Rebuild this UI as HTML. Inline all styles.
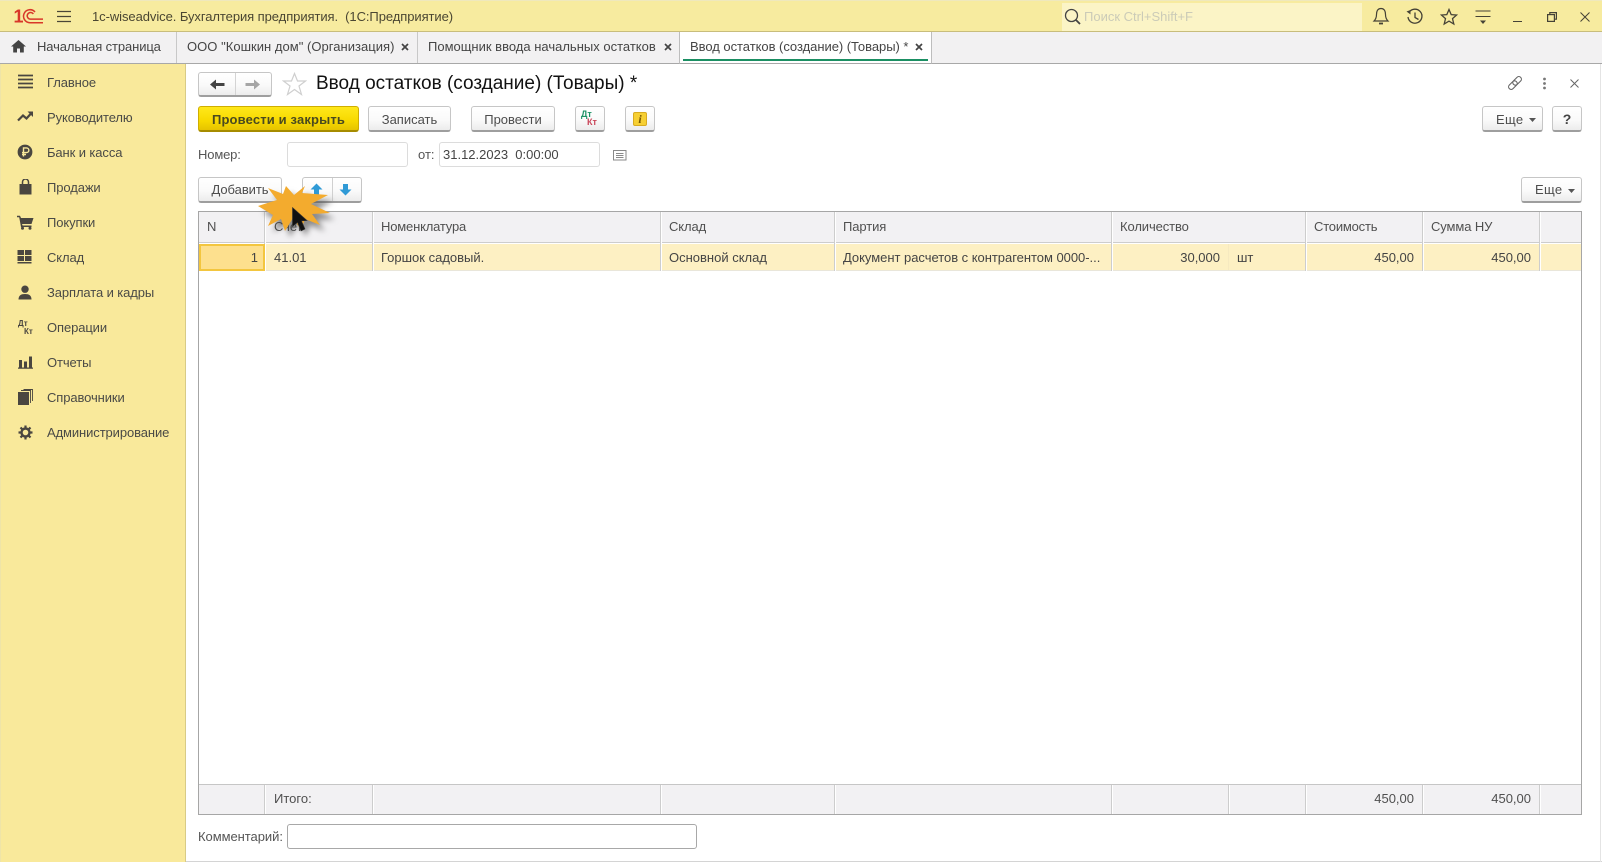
<!DOCTYPE html>
<html lang="ru"><head><meta charset="utf-8"><title>1C</title>
<style>
html,body{margin:0;padding:0;width:1602px;height:862px;overflow:hidden;background:#fff}
body{position:relative;font-family:"Liberation Sans","Noto Sans CJK SC",sans-serif;font-size:13px;color:#4a4a46}
div,span,svg{position:absolute;box-sizing:border-box}
.t{white-space:nowrap;line-height:16px}
.sb{letter-spacing:-0.1px}
.btn{background:linear-gradient(#fff,#fafafa 55%,#ececec);border:1px solid #c6c6c6;border-bottom:2px solid #9e9e9e;border-radius:3px;text-align:center;line-height:25px;color:#4d4d4d}
.inp{background:#fff;border:1px solid #dcdcdc;border-radius:3px}
.hd{top:213px;height:30px;line-height:28px;white-space:nowrap;color:#505050;letter-spacing:-0.1px}
.cl{top:245px;height:26px;line-height:25px;white-space:nowrap;color:#444}
.ft{top:785px;height:28px;line-height:27px;white-space:nowrap;color:#505050}
.sep{width:2px;background:#fff;border-left:1px solid #cdcdcd}
</style></head><body>

<!-- top bar -->
<div style="left:0;top:0;width:1602px;height:32px;background:#f7eb9f;border-bottom:1px solid #c8bd7c;border-top:1px solid #efe8bd"></div>
<svg style="left:13px;top:8px" width="32" height="17" viewBox="0 0 32 17" fill="none">
<text x="0.500" y="14.500" font-family="Liberation Sans" font-weight="700" font-size="18" fill="#d8372a">1</text>
<path d="M22 4A6.500 6.500 0 1 0 17 14.700H30M20.300 6A3.300 3.300 0 1 0 17.500 11.100H30" stroke="#d8372a" stroke-width="1.500"/>
</svg>
<svg style="left:56px;top:10px" width="16" height="13"><path d="M1 1.500H15M1 6.500H15M1 11.500H15" stroke="#4a4636" stroke-width="1.200"/></svg>
<div class="t" style="left:92px;top:9px;color:#4a4632;letter-spacing:-0.070px">1c-wiseadvice. Бухгалтерия предприятия.&nbsp; (1С:Предприятие)</div>

<div style="left:1062px;top:3px;width:300px;height:28px;background:#fbf4c6"></div>
<svg style="left:1064px;top:8px" width="18" height="18" fill="none"><circle cx="7.500" cy="7.500" r="6" stroke="#444" stroke-width="1.300"/><path d="M12 12L16 16" stroke="#444" stroke-width="1.800"/></svg>
<div class="t" style="left:1084px;top:9px;color:#cbcbb8;font-size:13px">Поиск Ctrl+Shift+F</div>
<svg style="left:1372px;top:7px" width="18" height="20" fill="none" stroke="#454236" stroke-width="1.200"><path d="M9 1.500C5.500 1.500 4.500 4.500 4.500 7.500C4.500 11 3.500 12.500 2 14H16C14.500 12.500 13.500 11 13.500 7.500C13.500 4.500 12.500 1.500 9 1.500Z"/><path d="M7 16.500H11" stroke-width="1.800"/></svg>
<svg style="left:1406px;top:8px" width="18" height="18" fill="none" stroke="#454236" stroke-width="1.300"><path d="M3 4.500A7 7 0 1 1 2 9"/><path d="M0.500 3.500L4.500 6.500L4.500 2" fill="#454236" stroke="none"/><path d="M9 4.500V9.500L12.500 11.500"/></svg>
<svg style="left:1440px;top:8px" width="18" height="18" fill="none" stroke="#454236" stroke-width="1.300"><path d="M9 1.500L11.200 6.600L16.600 7L12.500 10.600L13.800 16L9 13.100L4.200 16L5.500 10.600L1.400 7L6.800 6.600Z"/></svg>
<svg style="left:1475px;top:10px" width="16" height="16" fill="none"><path d="M0.500 1H15.500M0.500 6.500H15.500" stroke="#454236" stroke-width="1.100"/><path d="M5 10.500H11L8 14Z" fill="#454236"/></svg>
<div style="left:1513px;top:21px;width:9px;height:1px;background:#454236"></div>
<svg style="left:1547px;top:12px" width="10" height="10" fill="none" stroke="#454236" stroke-width="1.200"><rect x="0.600" y="2.600" width="6.800" height="6.800"/><path d="M2.800 2.500V.6H9.400V7.200H7.500"/></svg>
<svg style="left:1580px;top:12px" width="10" height="10" fill="none" stroke="#454236" stroke-width="1"><path d="M0.500 0.500L9.500 9.500M9.500 0.500L0.500 9.500"/></svg>

<!-- tab bar -->
<div style="left:0;top:32px;width:1602px;height:32px;background:#f2f1f2;border-bottom:1px solid #a8a8a8"></div>
<svg style="left:11px;top:40px" width="15" height="13"><path d="M7.500 0L0 6.500H2.200V12.500H6V8.500H9V12.500H12.800V6.500H15Z" fill="#444"/></svg>
<div class="t" style="left:37px;top:39px;color:#454545;letter-spacing:-0.110px">Начальная страница</div>
<div style="left:176px;top:32px;width:1px;height:31px;background:#c8c8c8"></div>
<div class="t" style="left:187px;top:39px;color:#454545;letter-spacing:0.030px">ООО "Кошкин дом" (Организация)</div>
<svg style="left:401px;top:43px" width="8" height="8"><path d="M1 1L7 7M7 1L1 7" stroke="#444" stroke-width="1.700"/></svg>
<div style="left:417px;top:32px;width:1px;height:31px;background:#c8c8c8"></div>
<div class="t" style="left:428px;top:39px;color:#454545">Помощник ввода начальных остатков</div>
<svg style="left:664px;top:43px" width="8" height="8"><path d="M1 1L7 7M7 1L1 7" stroke="#444" stroke-width="1.700"/></svg>
<div style="left:679px;top:32px;width:253px;height:32px;background:#fff;border-left:1px solid #bdbdbd;border-right:1px solid #bdbdbd;border-bottom:1px solid #a8a8a8"></div>
<div style="left:683px;top:59px;width:245px;height:2px;background:#1b8f63"></div>
<div class="t" style="left:690px;top:39px;color:#454545;letter-spacing:-0.040px">Ввод остатков (создание) (Товары) *</div>
<svg style="left:915px;top:43px" width="8" height="8"><path d="M1 1L7 7M7 1L1 7" stroke="#444" stroke-width="1.700"/></svg>

<!-- sidebar -->
<div style="left:0;top:64px;width:186px;height:798px;background:#f9e99b;border-right:1px solid #d8cb86;border-left:1px solid #efe4a8"></div>
<svg style="left:17px;top:74px" width="16" height="16"><path d="M1 1.500H16M1 5.500H16M1 9.500H16M1 13.500H16" stroke="#4a4640" stroke-width="1.800"/></svg>
<div class="t sb" style="left:47px;top:75px">Главное</div>
<svg style="left:17px;top:110px" width="17" height="13" fill="none"><path d="M1 10.500L6 5.500L9.500 8.500L14 3.500" stroke="#4a4640" stroke-width="2.200"/><path d="M10.500 1.500H16V7Z" fill="#4a4640"/></svg>
<div class="t sb" style="left:47px;top:110px">Руководителю</div>
<svg style="left:17px;top:144px" width="16" height="16"><circle cx="8" cy="8" r="7.400" fill="#4a4640"/><path d="M6.500 12.500V3.900H9.500A2.300 2.300 0 0 1 9.500 8.600H5M5 10.500H9" stroke="#f9e99b" stroke-width="1.400" fill="none"/></svg>
<div class="t sb" style="left:47px;top:145px">Банк и касса</div>
<svg style="left:19px;top:179px" width="13" height="16" fill="none"><path d="M0.500 5H12.500V15.500H0.500Z" fill="#4a4640"/><path d="M3.500 7V3A3 3 0 0 1 9.500 3V7" stroke="#4a4640" stroke-width="1.500"/></svg>
<div class="t sb" style="left:47px;top:180px">Продажи</div>
<svg style="left:17px;top:215px" width="17" height="15"><path d="M0 0.800H3L4 3H16.500L14.500 9H5L5.600 10.500H14.500V12H4L2.200 2.200H0Z" fill="#4a4640"/><circle cx="5.500" cy="13.300" r="1.500" fill="#4a4640"/><circle cx="13" cy="13.300" r="1.500" fill="#4a4640"/></svg>
<div class="t sb" style="left:47px;top:215px">Покупки</div>
<svg style="left:17px;top:250px" width="15" height="14"><path d="M0.500 0H7V5H0.500ZM8 0H14.500V5H8ZM0.500 6H7V11H0.500ZM8 6H14.500V11H8ZM0.500 12H14.500V13.500H0.500Z" fill="#4a4640"/></svg>
<div class="t sb" style="left:47px;top:250px">Склад</div>
<svg style="left:18px;top:285px" width="14" height="15"><circle cx="7" cy="4.200" r="3.700" fill="#4a4640"/><path d="M0.500 14.500C0.500 10.500 3 9 7 9S13.500 10.500 13.500 14.500Z" fill="#4a4640"/></svg>
<div class="t sb" style="left:47px;top:285px">Зарплата и кадры</div>
<div style="left:18px;top:319px;font:700 8px/9px 'Liberation Sans',sans-serif;color:#4a4640">Дт</div>
<div style="left:24px;top:327px;font:700 8px/9px 'Liberation Sans',sans-serif;color:#4a4640">Кт</div>
<div class="t sb" style="left:47px;top:320px">Операции</div>
<svg style="left:18px;top:356px" width="15" height="13"><path d="M1 4H4V11.500H1ZM6 5.500H9V11.500H6ZM11 0.500H14V11.500H11ZM0 11.500H15V12.700H0Z" fill="#4a4640"/></svg>
<div class="t sb" style="left:47px;top:355px">Отчеты</div>
<svg style="left:18px;top:389px" width="15" height="16" fill="none"><path d="M0 3H11V16H0Z" fill="#4a4640"/><path d="M3 1.500H12.500V14M5.500 0.500H14.500V12" stroke="#4a4640" stroke-width="0.900"/></svg>
<div class="t sb" style="left:47px;top:390px">Справочники</div>
<svg style="left:18px;top:425px" width="15" height="15" fill="none"><circle cx="7.500" cy="7.500" r="4" stroke="#4a4640" stroke-width="2.400"/><path d="M7.500 0.500V3M7.500 12V14.500M0.500 7.500H3M12 7.500H14.500M2.500 2.500L4.300 4.300M10.700 10.700L12.500 12.500M12.500 2.500L10.700 4.300M4.300 10.700L2.500 12.500" stroke="#4a4640" stroke-width="2.200"/></svg>
<div class="t sb" style="left:47px;top:425px">Администрирование</div>

<!-- form header -->
<div class="btn" style="left:198px;top:72px;width:74px;height:25px"></div>
<div style="left:235px;top:73px;width:1px;height:22px;background:#d4d4d4"></div>
<svg style="left:210px;top:79px" width="15" height="11"><path d="M0 5.500L6 0.500V4H14.500V7H6V10.500Z" fill="#444"/></svg>
<svg style="left:245px;top:79px" width="15" height="11"><path d="M15 5.500L9 0.500V4H0.500V7H9V10.500Z" fill="#a6a6a6"/></svg>
<svg style="left:282px;top:72px" width="25" height="24" fill="#fff" stroke="#cfcfcf" stroke-width="1.200"><path d="M12.500 1.500L15.500 9H23.500L17 14L19.500 22.500L12.500 17.500L5.500 22.500L8 14L1.500 9H9.500Z"/></svg>
<div class="t" style="left:316px;top:73px;font-size:19px;line-height:22px;color:#111">Ввод остатков (создание) (Товары) *</div>
<svg style="left:1506px;top:74px" width="18" height="18" fill="none" stroke="#666" stroke-width="1.100"><g transform="translate(9 9) rotate(-45)"><rect x="-8" y="-2.600" width="10" height="5.200" rx="2.600"/><rect x="-2" y="-2.600" width="10" height="5.200" rx="2.600"/></g></svg>
<svg style="left:1542px;top:77px" width="5" height="13"><circle cx="2.500" cy="2" r="1.400" fill="#777"/><circle cx="2.500" cy="6.500" r="1.400" fill="#777"/><circle cx="2.500" cy="11" r="1.400" fill="#777"/></svg>
<svg style="left:1570px;top:79px" width="9" height="9"><path d="M0.500 0.500L8.500 8.500M8.500 0.500L0.500 8.500" stroke="#666" stroke-width="1"/></svg>

<!-- command bar -->
<div class="btn" style="left:198px;top:106px;width:161px;height:26px;background:linear-gradient(#ffe81a,#f7d900 60%,#e6c300);border-color:#cfae00 #cfae00 #a68c00;font-weight:700;color:#4a4a20;letter-spacing:0.150px">Провести и закрыть</div>
<div class="btn" style="left:368px;top:106px;width:83px;height:26px">Записать</div>
<div class="btn" style="left:471px;top:106px;width:84px;height:26px">Провести</div>
<div class="btn" style="left:575px;top:106px;width:30px;height:26px"></div>
<div style="left:581px;top:110px;font:700 9px/9px 'Liberation Sans',sans-serif;color:#1e9265">Дт</div>
<div style="left:587px;top:118px;font:700 9px/9px 'Liberation Sans',sans-serif;color:#c9475a">Кт</div>
<div class="btn" style="left:625px;top:106px;width:30px;height:26px"></div>
<div style="left:633px;top:112px;width:14px;height:14px;background:#f6cf33;border:1px solid #d8ab20;border-radius:2px;text-align:center;font:italic 700 12px/12px 'Liberation Serif',serif;color:#7a5a00">i</div>
<div class="btn" style="left:1482px;top:106px;width:61px;height:26px;text-align:left;padding-left:13px;letter-spacing:0.300px">Еще</div>
<svg style="left:1529px;top:118px" width="7" height="4"><path d="M0 0H7L3.500 4Z" fill="#555"/></svg>
<div class="btn" style="left:1552px;top:106px;width:30px;height:26px;font-weight:700;font-size:14px;color:#444">?</div>

<!-- number row -->
<div class="t" style="left:198px;top:147px;color:#555;letter-spacing:-0.150px">Номер:</div>
<div class="inp" style="left:287px;top:142px;width:121px;height:25px"></div>
<div class="t" style="left:418px;top:147px;color:#555">от:</div>
<div class="inp" style="left:439px;top:142px;width:161px;height:25px"></div>
<div class="t" style="left:443px;top:147px;color:#444">31.12.2023&nbsp; 0:00:00</div>
<svg style="left:613px;top:150px" width="14" height="11" fill="none" stroke="#8a8a8a"><rect x="0.500" y="0.500" width="12.500" height="9.500"/><path d="M3 3.500H10.500M3 5.500H10.500M3 7.500H10.500"/></svg>

<!-- table toolbar -->
<div class="btn" style="left:198px;top:177px;width:84px;height:26px;line-height:23px;letter-spacing:-0.050px">Добавить</div>
<div class="btn" style="left:302px;top:177px;width:60px;height:26px"></div>
<div style="left:332px;top:178px;width:1px;height:23px;background:#d0d0d0"></div>
<svg style="left:310px;top:183px" width="13" height="13"><path d="M6.500 0.500L12.500 6.500H9V12H4V6.500H0.500Z" fill="#2f9ad6"/></svg>
<svg style="left:339px;top:183px" width="13" height="13"><path d="M6.500 12.500L12.500 6.500H9V1H4V6.500H0.500Z" fill="#2f9ad6"/></svg>
<div class="btn" style="left:1521px;top:177px;width:61px;height:26px;line-height:23px;text-align:left;padding-left:13px;letter-spacing:0.300px">Еще</div>
<svg style="left:1568px;top:189px" width="7" height="4"><path d="M0 0H7L3.500 4Z" fill="#555"/></svg>

<!-- table -->
<div style="left:198px;top:211px;width:1384px;height:604px;border:1px solid #a6a6a6;background:#fff"></div>
<div style="left:199px;top:212px;width:1382px;height:31px;background:#f2f1f3;border-bottom:1px solid #cdcdcd"></div>
<div style="left:199px;top:244px;width:1382px;height:27px;background:#fdf0c3;border-bottom:1px solid #e9e6da"></div>
<div style="left:199px;top:784px;width:1382px;height:30px;background:#f2f1f3;border-top:1px solid #c6c6c6"></div>

<div class="sep" style="left:264px;top:212px;height:59px"></div>
<div class="sep" style="left:372px;top:212px;height:59px"></div>
<div class="sep" style="left:660px;top:212px;height:59px"></div>
<div class="sep" style="left:834px;top:212px;height:59px"></div>
<div class="sep" style="left:1111px;top:212px;height:59px"></div>
<div class="sep" style="left:1305px;top:212px;height:59px"></div>
<div class="sep" style="left:1422px;top:212px;height:59px"></div>
<div class="sep" style="left:1539px;top:212px;height:59px"></div>
<div style="left:1228px;top:244px;width:1px;height:26px;background:#f6e9c0"></div>

<div class="sep" style="left:264px;top:785px;height:29px"></div>
<div class="sep" style="left:372px;top:785px;height:29px"></div>
<div class="sep" style="left:660px;top:785px;height:29px"></div>
<div class="sep" style="left:834px;top:785px;height:29px"></div>
<div class="sep" style="left:1111px;top:785px;height:29px"></div>
<div class="sep" style="left:1228px;top:785px;height:29px"></div>
<div class="sep" style="left:1305px;top:785px;height:29px"></div>
<div class="sep" style="left:1422px;top:785px;height:29px"></div>
<div class="sep" style="left:1539px;top:785px;height:29px"></div>

<div class="hd" style="left:207px">N</div>
<div class="hd" style="left:274px">Счет</div>
<div class="hd" style="left:381px;letter-spacing:-0.180px">Номенклатура</div>
<div class="hd" style="left:669px">Склад</div>
<div class="hd" style="left:843px">Партия</div>
<div class="hd" style="left:1120px">Количество</div>
<div class="hd" style="left:1314px;letter-spacing:-0.200px">Стоимость</div>
<div class="hd" style="left:1431px">Сумма НУ</div>

<div style="left:199px;top:244px;width:66px;height:27px;background:#fde08e;border:2px solid #f3c63f"></div>
<div class="cl" style="left:200px;width:58px;text-align:right">1</div>
<div class="cl" style="left:274px">41.01</div>
<div class="cl" style="left:381px">Горшок садовый.</div>
<div class="cl" style="left:669px">Основной склад</div>
<div class="cl" style="left:843px;letter-spacing:-0.030px">Документ расчетов с контрагентом 0000-...</div>
<div class="cl" style="left:1120px;width:100px;text-align:right">30,000</div>
<div class="cl" style="left:1237px">шт</div>
<div class="cl" style="left:1314px;width:100px;text-align:right">450,00</div>
<div class="cl" style="left:1431px;width:100px;text-align:right">450,00</div>

<div class="ft" style="left:274px">Итого:</div>
<div class="ft" style="left:1314px;width:100px;text-align:right">450,00</div>
<div class="ft" style="left:1431px;width:100px;text-align:right">450,00</div>

<!-- comment -->
<div class="t" style="left:198px;top:829px;color:#555;letter-spacing:-0.050px">Комментарий:</div>
<div class="inp" style="left:287px;top:824px;width:410px;height:25px;border-color:#a8a8a8"></div>
<div style="left:186px;top:861px;width:1416px;height:1px;background:#d4d4d4"></div>
<div style="left:1600px;top:64px;width:1px;height:798px;background:#e4e4e4"></div>

<!-- click burst and cursor -->
<svg style="left:250px;top:176px;overflow:visible;filter:drop-shadow(5px 6px 3px rgba(70,70,70,.6))" width="90" height="62" viewBox="0 0 90 62">
<path d="M8 30L27 24L18 12L33 18L36 10L44 19L55 10L52 17L78 19L61 28L80 37L62 38L70 49L55 43L51 54L43 42L35 55L31 43L18 50L23 39Z" fill="#f3ab2e"/>
</svg>
<svg style="left:291px;top:206px" width="18" height="28"><path d="M1.500 1.500L1.500 20.500L6.500 16.500L10 25L14 23L10.500 15L16 14.500Z" fill="#111" stroke="#333" stroke-width="0.600"/></svg>
</body></html>
